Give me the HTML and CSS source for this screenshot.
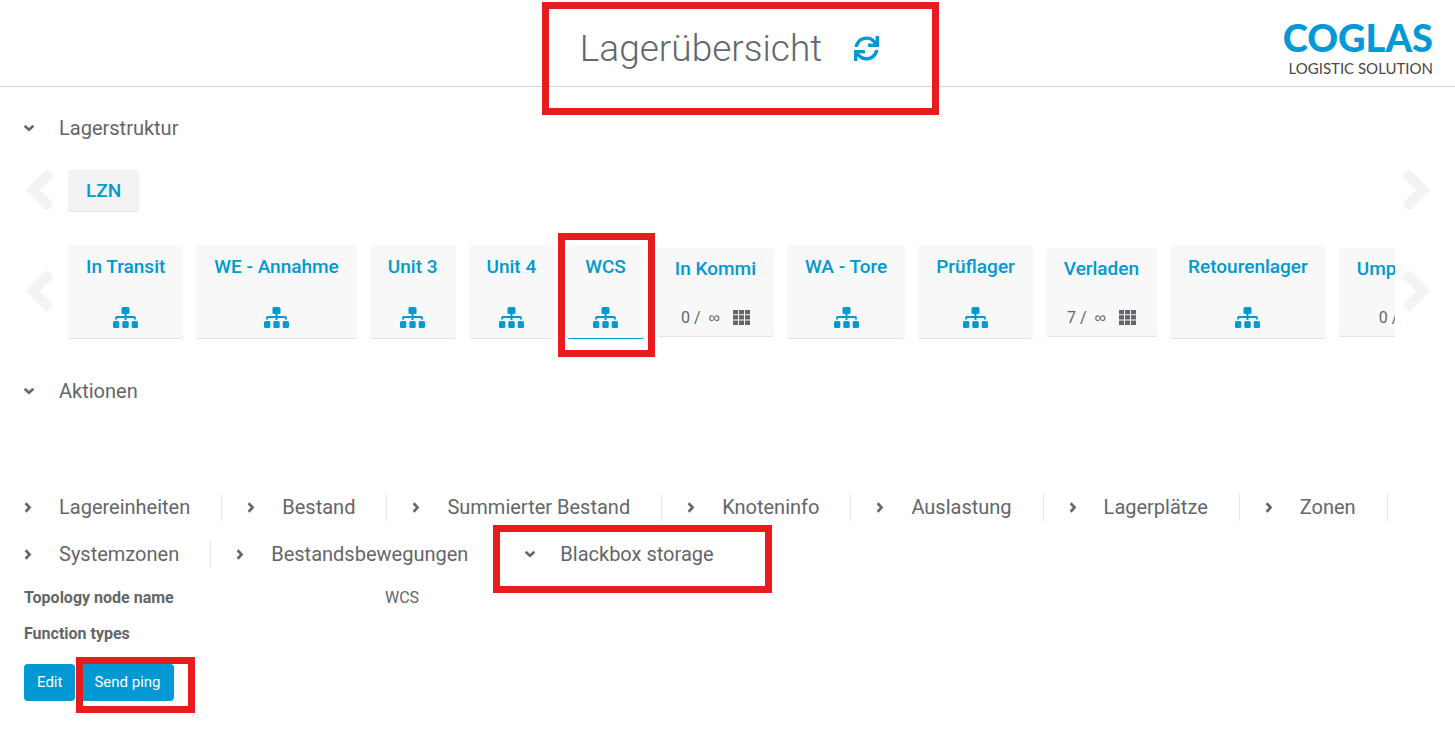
FILE: index.html
```html
<!DOCTYPE html>
<html lang="de">
<head>
<meta charset="utf-8">
<title>Lagerübersicht</title>
<link rel="stylesheet" href="styles.css">
</head>
<body>
<svg class="symbols" aria-hidden="true">
  <symbol id="sync" viewBox="0 0 512 512"><path d="M440.65 12.57l4 82.77A247.16 247.16 0 0 0 255.83 8C134.73 8 33.91 94.92 12.29 209.82A12 12 0 0 0 24.09 224h49.05a12 12 0 0 0 11.67-9.26 175.91 175.91 0 0 1 317-56.94l-101.46-4.86a12 12 0 0 0-12.57 12v47.41a12 12 0 0 0 12 12H500a12 12 0 0 0 12-12V12a12 12 0 0 0-12-12h-47.37a12 12 0 0 0-11.98 12.57zM255.83 432a175.61 175.61 0 0 1-146-77.8l101.8 4.87a12 12 0 0 0 12.57-12v-47.4a12 12 0 0 0-12-12H12a12 12 0 0 0-12 12V500a12 12 0 0 0 12 12h47.35a12 12 0 0 0 12-12.6l-4.15-82.57A247.17 247.17 0 0 0 255.83 504c121.11 0 221.93-86.92 243.55-201.82a12 12 0 0 0-11.8-14.18h-49.05a12 12 0 0 0-11.67 9.26A175.86 175.86 0 0 1 255.83 432z"/></symbol>
  <symbol id="left" viewBox="0 0 27 40"><path d="M1 18.4 18.3 1.1a3.4 3.4 0 0 1 4.8 0l2.5 2.5a3.4 3.4 0 0 1 0 4.8L13.8 20l11.8 11.6a3.4 3.4 0 0 1 0 4.8l-2.5 2.5a3.4 3.4 0 0 1-4.8 0L1 21.6a2.2 2.2 0 0 1 0-3.2z"/></symbol>
  <symbol id="right" viewBox="0 0 27 40"><use href="#left" transform="rotate(180 13.5 20)" width="27" height="40"/></symbol>
  <symbol id="tree" viewBox="0 0 25 21"><rect x="8.5" width="8" height="7" rx="1.5"/><rect y="14" width="6.3" height="7" rx="1.5"/><rect x="9.3" y="14" width="6.4" height="7" rx="1.5"/><rect x="18.7" y="14" width="6.3" height="7" rx="1.5"/><path d="M3.1 12.5v-1.7q0-.8.8-.8h17.2q.8 0 .8.8v1.7M12.5 7v6" fill="none" stroke="currentColor" stroke-width="2"/></symbol>
  <symbol id="grid" viewBox="0 0 17 15"><path d="M0 0h5v4.300H0zM6 0h5v4.300H6zM12 0h5v4.300h-5zM0 5.300h5v4.300H0zM6 5.300h5v4.300H6zM12 5.300h5v4.300h-5zM0 10.600h5v4.300H0zM6 10.600h5v4.300H6zM12 10.600h5v4.300h-5z"/></symbol>
  <symbol id="down" viewBox="0 0 12 12"><path d="M1.600 3.600 5 6.700 8.400 3.600" fill="none" stroke="currentColor" stroke-width="2.6" stroke-linecap="square"/></symbol>
  <symbol id="next" viewBox="0 0 12 12"><path d="M2.500 2.200 5.600 5.500 2.500 8.800" fill="none" stroke="currentColor" stroke-width="2.6" stroke-linecap="square"/></symbol>
</svg>

<header class="header">
  <div class="headline">
    <h1 class="title">Lagerübersicht</h1>
    <button class="refresh" aria-label="Aktualisieren"><svg><use href="#sync"/></svg></button>
    <span class="mark mark-title"></span>
  </div>
  <a class="logo" href="#"><span class="logo-name">COGLAS</span><span class="logo-claim">LOGISTIC SOLUTION</span></a>
</header>

<main class="main">
  <section>
    <h2 class="section"><button class="toggle"><svg class="caret"><use href="#down"/></svg>Lagerstruktur</button></h2>
    <div class="level level-root">
      <button class="scroll" aria-label="Zurück"><svg><use href="#left"/></svg></button>
      <div class="strip"><button class="node root">LZN</button></div>
      <button class="scroll scroll-end" aria-label="Weiter"><svg><use href="#right"/></svg></button>
    </div>
    <div class="level level-child">
      <button class="scroll" aria-label="Zurück"><svg><use href="#left"/></svg></button>
      <div class="strip">
        <button class="node">In Transit<svg class="tree"><use href="#tree"/></svg></button>
        <button class="node">WE - Annahme<svg class="tree"><use href="#tree"/></svg></button>
        <button class="node">Unit 3<svg class="tree"><use href="#tree"/></svg></button>
        <button class="node">Unit 4<svg class="tree"><use href="#tree"/></svg></button>
        <button class="node active">WCS<svg class="tree"><use href="#tree"/></svg><span class="mark mark-node"></span></button>
        <button class="node leaf">In Kommi<span class="load">0 / <span class="inf">∞</span><svg class="grid"><use href="#grid"/></svg></span></button>
        <button class="node">WA - Tore<svg class="tree"><use href="#tree"/></svg></button>
        <button class="node">Prüflager<svg class="tree"><use href="#tree"/></svg></button>
        <button class="node leaf">Verladen<span class="load">7 / <span class="inf">∞</span><svg class="grid"><use href="#grid"/></svg></span></button>
        <button class="node">Retourenlager<svg class="tree"><use href="#tree"/></svg></button>
        <button class="node leaf">Umplatzieren<span class="load">0 / <span class="inf">∞</span><svg class="grid"><use href="#grid"/></svg></span></button>
      </div>
      <button class="scroll scroll-end" aria-label="Weiter"><svg><use href="#right"/></svg></button>
    </div>
  </section>

  <section class="actions">
    <h2 class="section"><button class="toggle"><svg class="caret"><use href="#down"/></svg>Aktionen</button></h2>
  </section>

  <nav class="tabs">
    <button class="toggle tab"><svg class="caret"><use href="#next"/></svg>Lagereinheiten</button>
    <button class="toggle tab"><svg class="caret"><use href="#next"/></svg>Bestand</button>
    <button class="toggle tab"><svg class="caret"><use href="#next"/></svg>Summierter Bestand</button>
    <button class="toggle tab"><svg class="caret"><use href="#next"/></svg>Knoteninfo</button>
    <button class="toggle tab"><svg class="caret"><use href="#next"/></svg>Auslastung</button>
    <button class="toggle tab"><svg class="caret"><use href="#next"/></svg>Lagerplätze</button>
    <button class="toggle tab"><svg class="caret"><use href="#next"/></svg>Zonen</button>
    <button class="toggle tab"><svg class="caret"><use href="#next"/></svg>Systemzonen</button>
    <button class="toggle tab"><svg class="caret"><use href="#next"/></svg>Bestandsbewegungen</button>
    <button class="toggle tab open"><svg class="caret"><use href="#down"/></svg>Blackbox storage<span class="mark mark-tab"></span></button>
  </nav>

  <dl class="facts">
    <dt>Topology node name</dt><dd>WCS</dd>
    <dt>Function types</dt><dd></dd>
  </dl>
  <div class="buttons">
    <button class="btn">Edit</button>
    <button class="btn">Send ping<span class="mark mark-btn"></span></button>
  </div>
</main>
</body>
</html>
```
FILE: styles.css
```css
* { box-sizing: border-box; }
body {
  margin: 0;
  background: #fff;
  color: #63666a;
  font: 16px/24px Roboto, sans-serif;
}
button {
  margin: 0;
  padding: 0;
  border: 0;
  background: none;
  color: inherit;
  font: inherit;
  cursor: pointer;
}
svg { display: block; fill: currentColor; }
.symbols { position: absolute; width: 0; height: 0; }

.header {
  display: grid;
  grid-template-columns: 1fr auto 1fr;
  align-items: center;
  height: 87px;
  padding: 0 22px;
  border-bottom: 1px solid #d6d6d6;
}
.headline {
  grid-column: 2;
  position: relative;
  display: flex;
  align-items: center;
  gap: 32px;
  margin: 10px 0 0 4px;
}
.title { margin: 0; padding-top: 2px; font-size: 37px; line-height: 46px; font-weight: 300; }
.refresh { color: #0099d3; }
.refresh svg { width: 25px; height: 25px; }
.logo {
  justify-self: end;
  display: flex;
  flex-direction: column;
  align-items: flex-end;
  margin-top: 10px;
  color: #4a4644;
  font-family: Lato, sans-serif;
  text-decoration: none;
}
.logo-name { color: #0099d8; font-size: 38px; line-height: 40px; font-weight: 900; }
.logo-claim { font-size: 15px; line-height: 22px; }

.main { padding: 27px 24px; }
.section { margin: 0; font-weight: 400; font-size: 20px; line-height: 28px; }
.toggle {
  position: relative;
  display: flex;
  align-items: center;
  font-size: 20px;
  line-height: 29px;
}
.caret { width: 12px; height: 12px; margin-right: 23px; }

.level { display: flex; align-items: center; }
.level-root { height: 42px; margin-top: 27px; }
.level-child { height: 94px; margin-top: 33px; }
.scroll { flex: none; width: 44px; padding: 0 0 2px 2px; color: #f3f3f3; }
.scroll svg { width: 27px; height: 40px; }
.scroll-end { width: 36px; padding-left: 8px; }
.strip {
  flex: 1;
  min-width: 0;
  display: flex;
  align-items: center;
  gap: 13px;
  overflow-x: clip;
}
.node {
  position: relative;
  flex: none;
  display: flex;
  flex-direction: column;
  align-items: center;
  height: 94px;
  padding: 9px 18px 8px;
  border-bottom: 1px solid #e2e3e5;
  border-radius: 3px;
  background: #f8f8f8;
  color: #0099d3;
  font-size: 19px;
  line-height: 26px;
  font-weight: 500;
}
.root { height: 42px; padding-top: 8px; background: #f3f3f3; }
.active { z-index: 1; border-bottom-color: #0099d3; }
.leaf { height: 89px; padding-top: 8px; }
.tree { width: 25px; height: 21px; margin-top: 27px; }
.load {
  display: flex;
  align-items: center;
  margin-top: 24px;
  color: #63666a;
  font-size: 16px;
  line-height: 24px;
  font-weight: 400;
}
.inf { margin: 0 13px 0 8px; font-family: "Liberation Sans", sans-serif; }
.grid { width: 17px; height: 15px; }

.actions { margin-top: 38px; }
.tabs {
  display: flex;
  flex-wrap: wrap;
  gap: 18px 25px;
  margin-top: 87px;
}
.tab { padding-right: 31px; border-right: 1px solid #e4e5e7; border-radius: 3px; }
.open { border-right: 0; }

.facts {
  display: grid;
  grid-template-columns: 361px 1fr;
  row-gap: 12px;
  margin: 17px 0 0;
}
.facts dt { font-weight: 700; }
.facts dd { margin: 0; }
.buttons { display: flex; gap: 6px; margin-top: 18px; }
.btn {
  position: relative;
  height: 37px;
  padding: 0 13px 2px;
  border-radius: 4px;
  background: #0099d3;
  color: #fff;
  font-size: 15px;
}

.mark { position: absolute; border: 7px solid #e81c1c; pointer-events: none; }
.mark-title { inset: -22px -60px -43px -38px; }
.mark-node { inset: -12px -11px -19px -9px; }
.mark-tab { inset: -15px -27px -24px -32px; }
.mark-btn { inset: -7px -21px -12px -5px; }
```
